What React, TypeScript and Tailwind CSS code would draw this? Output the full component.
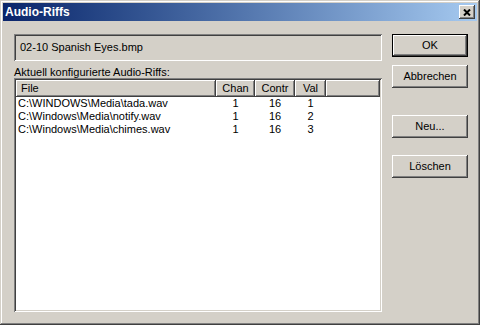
const font = { fontFamily: '"Liberation Sans", Arial, sans-serif' };

const raised =
  'bg-[#d4d0c8] shadow-[inset_-1px_-1px_#404040,inset_1px_1px_#ffffff,inset_-2px_-2px_#808080,inset_2px_2px_#d4d0c8]';
const sunken =
  'shadow-[inset_1px_1px_#808080,inset_-1px_-1px_#ffffff,inset_2px_2px_#404040,inset_-2px_-2px_#d4d0c8]';

const rows = [
  { file: 'C:\\WINDOWS\\Media\\tada.wav', chan: 1, contr: 16, val: 1 },
  { file: 'C:\\Windows\\Media\\notify.wav', chan: 1, contr: 16, val: 2 },
  { file: 'C:\\Windows\\Media\\chimes.wav', chan: 1, contr: 16, val: 3 },
];

const Button = ({ label, isDefault }: { label: string; isDefault?: boolean }) => (
  <div
    className={`flex h-[23px] w-[76px] items-center justify-center text-[11px] text-black ${raised} ${
      isDefault ? 'border border-black' : ''
    }`}
  >
    {label}
  </div>
);

const HeaderCell = ({ label, className }: { label: string; className: string }) => (
  <div className={`flex h-[17px] items-center text-[11px] ${raised} ${className}`}>{label}</div>
);

export default function App() {
  return (
    <div
      style={font}
      className="flex h-[325px] w-[480px] flex-col bg-[#d4d0c8] p-[3px] shadow-[inset_-1px_-1px_#404040,inset_1px_1px_#d4d0c8,inset_-2px_-2px_#808080,inset_2px_2px_#ffffff]"
    >
      {/* title bar */}
      <div className="flex h-[18px] items-center justify-between bg-gradient-to-r from-[#0a246a] to-[#a6caf0] px-[2px]">
        <span className="text-[12px] font-bold text-white">Audio-Riffs</span>
        <div className={`flex h-[14px] w-[16px] items-center justify-center ${raised}`}>
          <svg width="8" height="7" viewBox="0 0 8 7">
            <path d="M1 0.5L7 6.5M7 0.5L1 6.5" stroke="#000" strokeWidth="2" />
          </svg>
        </div>
      </div>

      {/* body */}
      <div className="flex flex-1 gap-[10px] pl-[11px] pt-[13px]">
        <div className="flex w-[368px] flex-col">
          <div className={`flex h-[27px] items-center bg-[#d4d0c8] pl-[6px] text-[11px] text-black ${sunken}`}>
            02-10 Spanish Eyes.bmp
          </div>
          <div className="mt-[5px] h-[13px] text-[11px] leading-[13px] text-black">
            Aktuell konfigurierte Audio-Riffs:
          </div>
          <div className={`mt-[-1px] flex h-[234px] flex-col bg-white p-[2px] ${sunken}`}>
            <div className="flex">
              <HeaderCell label="File" className="w-[200px] pl-[5px]" />
              <HeaderCell label="Chan" className="w-[39px] justify-center" />
              <HeaderCell label="Contr" className="w-[40px] justify-center" />
              <HeaderCell label="Val" className="w-[31px] justify-center" />
              <HeaderCell label="" className="flex-1" />
            </div>
            {rows.map((r) => (
              <div key={r.val} className="flex h-[13px] items-center text-[11px] leading-[13px] text-black">
                <div className="w-[200px] pl-[2px]">{r.file}</div>
                <div className="w-[39px] text-center">{r.chan}</div>
                <div className="w-[40px] text-center">{r.contr}</div>
                <div className="w-[31px] text-center">{r.val}</div>
              </div>
            ))}
          </div>
        </div>

        <div className="flex flex-col">
          <Button label="OK" isDefault />
          <div className="mt-[8px]">
            <Button label="Abbrechen" />
          </div>
          <div className="mt-[27px]">
            <Button label="Neu..." />
          </div>
          <div className="mt-[17px]">
            <Button label="Löschen" />
          </div>
        </div>
      </div>
    </div>
  );
}
